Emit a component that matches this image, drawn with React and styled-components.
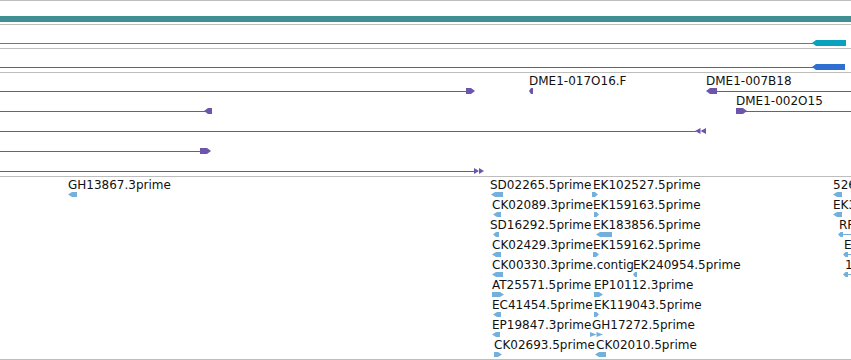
import styled, { createGlobalStyle } from 'styled-components'

const GlobalStyle = createGlobalStyle`
  html, body {
    margin: 0;
    padding: 0;
    background: #fff;
    overflow: hidden;
  }
  body {
    font-family: "DejaVu Sans", sans-serif;
  }
`;

const Page = styled.div`
  width: 851px;
  height: 360px;
  display: flex;
  flex-direction: column;
  overflow: hidden;
`;

const Track = styled.div`
  position: relative;
  flex: none;
  box-sizing: border-box;
  height: ${(p) => p.$h}px;
  border-top: 1px solid #bdbdbd;
  border-bottom: ${(p) => (p.$last ? '1px solid #bdbdbd' : 'none')};
  overflow: hidden;
`;

const SummaryBar = styled.div`
  margin-top: 15px;
  height: 6px;
  background: #3f8f93;
`;

// intron / connector line, placed on the track's coordinate axis
const Line = styled.div`
  position: absolute;
  height: 1px;
  top: ${(p) => p.$row * 20 + 18}px;
  background: ${(p) => p.$color};
`;

const Feature = styled.div`
  position: absolute;
  top: ${(p) => p.$row * 20 + 1}px;
  display: flex;
  flex-direction: column;
`;

const Label = styled.div`
  height: 14px;
  line-height: 14px;
  font-size: 12px;
  color: #111;
  white-space: nowrap;
`;

const GlyphBox = styled.svg`
  display: block;
  margin-left: ${(p) => p.$shift}px;
`;

const Glyph = ({ w, h, dir, color, tail = 0, shift = 0 }) => {
  const m = h / 2;
  const a = Math.min(4, w * 0.5);
  let shapes;
  if (dir === 'l') {
    shapes = [`0,${m} ${a},0 ${w},0 ${w},${h} ${a},${h}`];
  } else if (dir === 'r') {
    shapes = [`0,0 ${w - a},0 ${w},${m} ${w - a},${h} 0,${h}`];
  } else if (dir === 'll') {
    const half = w / 2;
    shapes = [`0,${m} ${half},0 ${half},${h}`, `${half},${m} ${w},0 ${w},${h}`];
  } else {
    const half = w / 2;
    shapes = [`0,0 ${half},${m} 0,${h}`, `${half},0 ${w},${m} ${half},${h}`];
  }
  return (
    <GlyphBox $shift={shift} width={w + tail} height={h} viewBox={`0 0 ${w + tail} ${h}`}>
      {shapes.map((pts, i) => (
        <polygon key={i} points={pts} fill={color} />
      ))}
      {tail > 0 && <rect x={w} y={Math.floor(m)} width={tail} height={1} fill={color} />}
    </GlyphBox>
  );
};

const PURPLE = '#6c55aa';
const EST = '#74b0dc';

const purpleLines = [
  { row: 0, from: 0, to: 467 },
  { row: 0, from: 716, to: 851 },
  { row: 1, from: 0, to: 205 },
  { row: 1, from: 746, to: 851 },
  { row: 2, from: 0, to: 696 },
  { row: 3, from: 0, to: 201 },
  { row: 4, from: 0, to: 475 },
];

const purpleFeatures = [
  { row: 0, x: 466, w: 9, dir: 'r' },
  { row: 0, x: 529, w: 4, dir: 'l', label: 'DME1-017O16.F' },
  { row: 0, x: 706, w: 11, dir: 'l', label: 'DME1-007B18' },
  { row: 1, x: 204, w: 8, dir: 'l' },
  { row: 1, x: 736, w: 11, dir: 'r', label: 'DME1-002O15' },
  { row: 2, x: 695, w: 11, dir: 'll' },
  { row: 3, x: 200, w: 11, dir: 'r' },
  { row: 4, x: 474, w: 10, dir: 'rr' },
];

const ests = [
  { row: 0, x: 68, gx: 68, w: 9, dir: 'l', label: 'GH13867.3prime' },

  { row: 0, x: 490, gx: 491, w: 12, dir: 'l', label: 'SD02265.5prime' },
  { row: 1, x: 492, gx: 493, w: 8, dir: 'l', label: 'CK02089.3prime' },
  { row: 2, x: 490, gx: 493, w: 6, dir: 'l', label: 'SD16292.5prime' },
  { row: 3, x: 492, gx: 492, w: 9, dir: 'l', label: 'CK02429.3prime' },
  { row: 4, x: 492, gx: 492, w: 11, dir: 'l', label: 'CK00330.3prime.contig' },
  { row: 5, x: 492, gx: 492, w: 12, dir: 'r', label: 'AT25571.5prime' },
  { row: 6, x: 492, gx: 493, w: 8, dir: 'l', label: 'EC41454.5prime' },
  { row: 7, x: 492, gx: 492, w: 8, dir: 'l', label: 'EP19847.3prime' },
  { row: 8, x: 494, gx: 494, w: 8, dir: 'r', label: 'CK02693.5prime' },

  { row: 0, x: 593, gx: 592, w: 6, dir: 'r', label: 'EK102527.5prime' },
  { row: 1, x: 593, gx: 594, w: 5, dir: 'r', label: 'EK159163.5prime' },
  { row: 2, x: 593, gx: 596, w: 16, dir: 'l', label: 'EK183856.5prime' },
  { row: 3, x: 593, gx: 593, w: 6, dir: 'r', label: 'EK159162.5prime' },
  { row: 4, x: 633, gx: 633, w: 4, dir: 'l', label: 'EK240954.5prime' },
  { row: 5, x: 594, gx: 594, w: 9, dir: 'r', label: 'EP10112.3prime' },
  { row: 6, x: 594, gx: 594, w: 5, dir: 'r', label: 'EK119043.5prime' },
  { row: 7, x: 592, gx: 590, w: 13, dir: 'rr', label: 'GH17272.5prime' },
  { row: 8, x: 596, gx: 595, w: 11, dir: 'l', label: 'CK02010.5prime' },

  { row: 0, x: 833, gx: 833, w: 9, dir: 'l', label: '526614.5prime' },
  { row: 1, x: 833, gx: 833, w: 9, dir: 'l', label: 'EK340125.5prime' },
  { row: 2, x: 839, gx: 838, w: 5, dir: 'l', tail: 10, label: 'RF01127.5prime' },
  { row: 3, x: 844, gx: 843, w: 5, dir: 'l', tail: 10, label: 'EK290153.5prime' },
  { row: 4, x: 845, gx: 843, w: 5, dir: 'l', tail: 10, label: '1A02154.5prime' },
];

const App = () => {
  return (
    <Page>
      <GlobalStyle />
      <Track $h={24}>
        <SummaryBar />
      </Track>

      <Track $h={24}>
        <Line $row={0} $color="#2596ad" style={{ left: 0, width: 814 }} />
        <Feature $row={0} style={{ left: 812 }}>
          <Label />
          <Glyph w={34} h={6} dir="l" color="#08a2bf" />
        </Feature>
      </Track>

      <Track $h={24}>
        <Line $row={0} $color="#3b6cb4" style={{ left: 0, width: 814 }} />
        <Feature $row={0} style={{ left: 812 }}>
          <Label />
          <Glyph w={33} h={6} dir="l" color="#2f6fd0" />
        </Feature>
      </Track>

      <Track $h={104}>
        {purpleLines.map((l, i) => (
          <Line key={i} $row={l.row} $color={PURPLE} style={{ left: l.from, width: l.to - l.from }} />
        ))}
        {purpleFeatures.map((f, i) => (
          <Feature key={i} $row={f.row} style={{ left: f.x }}>
            <Label>{f.label}</Label>
            <Glyph w={f.w} h={6} dir={f.dir} color={PURPLE} />
          </Feature>
        ))}
      </Track>

      <Track $h={184} $last>
        {ests.map((f, i) => (
          <Feature key={i} $row={f.row} style={{ left: f.x }}>
            <Label>{f.label}</Label>
            <Glyph w={f.w} h={5} dir={f.dir} color={EST} tail={f.tail} shift={f.gx - f.x} />
          </Feature>
        ))}
      </Track>
    </Page>
  );
};

export default App;
